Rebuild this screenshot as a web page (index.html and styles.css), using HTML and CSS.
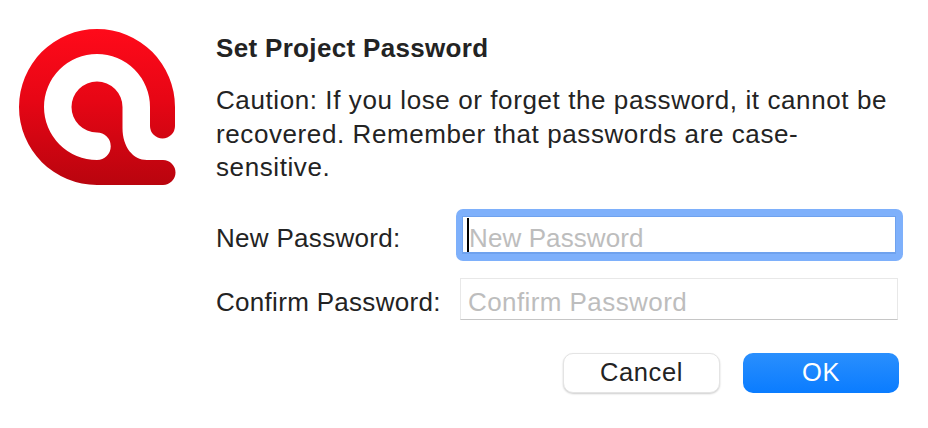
FILE: index.html
```html
<!DOCTYPE html>
<html lang="en">
<head>
<meta charset="utf-8">
<title>Set Project Password</title>
<link rel="stylesheet" href="styles.css">
</head>
<body>
<main class="dialog">
  <svg class="logo" viewBox="0 0 160 160" width="160" height="160" aria-hidden="true">
    <defs>
      <linearGradient id="logoFill" x1="0" y1="0" x2="0" y2="1">
        <stop offset="0" stop-color="#ff0a1a"/>
        <stop offset="0.45" stop-color="#e70615"/>
        <stop offset="1" stop-color="#b9040e"/>
      </linearGradient>
    </defs>
    <path fill="url(#logoFill)" d="M79 1A78 78 0 0 1 157 79V98A12.5 12.5 0 0 1 132 98V79A53 53 0 0 0 79 26A53 53 0 0 0 26 79A53 53 0 0 0 79 132A13.7 13.7 0 0 0 79 104.500A25.500 25.500 0 1 1 104.500 79V100C104.500 119 115 132 129 132H145A12.500 12.500 0 0 1 145 157H79A78 78 0 0 1 1 79A78 78 0 0 1 79 1Z"/>
  </svg>
  <div class="content">
    <h1 class="title">Set Project Password</h1>
    <p class="message">Caution: If you lose or forget the password, it cannot be recovered. Remember that passwords are case-sensitive.</p>
    <div class="form">
      <label class="label" for="new">New Password:</label>
      <div class="focus-ring">
        <input class="field field-focus" id="new" type="text" placeholder="New Password">
        <span class="caret"></span>
      </div>
      <label class="label" for="confirm">Confirm Password:</label>
      <input class="field field-plain" id="confirm" type="text" placeholder="Confirm Password">
    </div>
    <div class="actions">
      <button class="btn btn-cancel" type="button">Cancel</button>
      <button class="btn btn-ok" type="button">OK</button>
    </div>
  </div>
</main>
</body>
</html>
```
FILE: styles.css
```css
* { box-sizing: border-box; }
html, body { margin: 0; height: 100%; background: #fff; }
body {
  font-family: "Liberation Sans", Arial, sans-serif;
  color: #232323;
  overflow: hidden;
}
.dialog {
  display: flex;
  width: 928px;
  height: 428px;
  padding: 28px 0 0 18px;
}
.logo { flex: none; }
.content {
  flex: none;
  width: 686px;
  margin-left: 38px;
}
.title {
  margin: 5px 0 0;
  font-size: 26px;
  line-height: 30px;
  font-weight: 700;
  letter-spacing: 0.33px;
}
.message {
  margin: 21px 0 0;
  width: 680px;
  font-size: 26px;
  line-height: 33.500px;
  letter-spacing: 0.59px;
}
.form {
  display: grid;
  grid-template-columns: 240px 447px;
  align-items: center;
  row-gap: 17px;
  margin-top: 24px;
}
.label {
  font-size: 26px;
  letter-spacing: 0.3px;
  white-space: nowrap;
  padding-top: 7px;
}
.focus-ring {
  position: relative;
  width: 447px;
  height: 52px;
  padding: 7px 7px 7px 6px;
  background: #7eb0fb;
  border-radius: 7px;
}
.field {
  display: block;
  font-family: inherit;
  font-size: 26px;
  background: #fff;
  outline: none;
  border-radius: 0;
  margin: 0;
}
.field::placeholder { color: #bdbdbd; opacity: 1; }
.field-focus {
  width: 100%;
  height: 100%;
  padding: 9px 6px 0;
  letter-spacing: 0.1px;
  border: 0;
  border-top: 1px solid #6fa2ee;
  border-bottom: 2px solid #6fa2ee;
  border-left: 1px solid #6fa2ee;
  border-right: 1px solid #6fa2ee;
}
.caret {
  position: absolute;
  left: 11px;
  top: 9px;
  width: 2px;
  height: 34px;
  background: #000;
}
.field-plain {
  justify-self: start;
  width: 438px;
  height: 42px;
  margin-left: 4px;
  padding: 8px 7px 0;
  letter-spacing: 0.42px;
  border: 1px solid #e8e8e8;
  border-bottom: 1px solid #c6c6c6;
}
.actions {
  display: flex;
  justify-content: flex-end;
  gap: 23px;
  margin-top: 33px;
  padding-right: 3px;
}
.btn {
  width: 157px;
  height: 40px;
  border-radius: 10px;
  font-family: inherit;
  font-size: 25.500px;
  letter-spacing: 0.6px;
  padding: 0;
}
.btn-cancel {
  background: #fff;
  color: #232323;
  border: 1px solid #e4e4e4;
  box-shadow: 0 1px 2px rgba(0, 0, 0, 0.2);
}
.btn-ok {
  width: 156px;
  background: linear-gradient(#2a8ffd, #0a7cff);
  color: #fff;
  border: 0;
}
```
